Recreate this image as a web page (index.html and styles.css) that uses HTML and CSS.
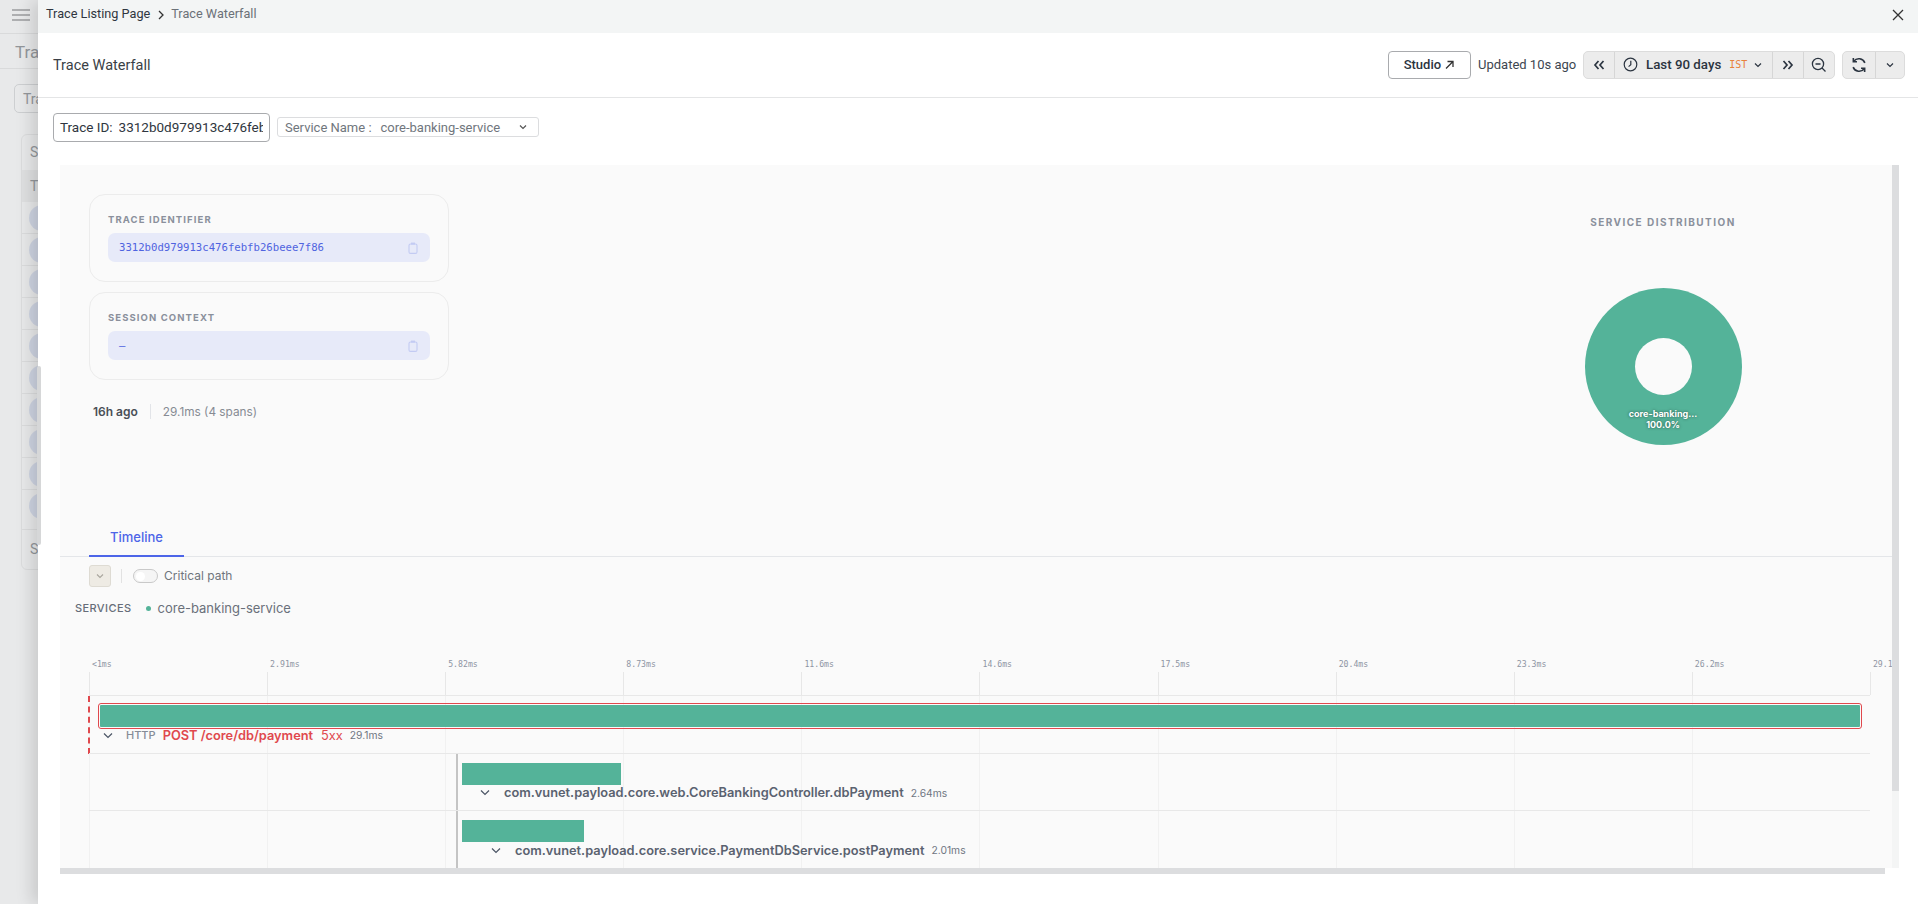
FILE: index.html
```html
<!DOCTYPE html>
<html lang="en">
<head>
    <meta charset="UTF-8">
    <title>Trace Waterfall</title>
    <link rel="stylesheet" href="styles.css">
</head>
<body>
    <!-- dimmed listing page behind the drawer -->
    <div class="page">
        <div class="page-top">
            <svg class="burger" width="18" height="12" viewBox="0 0 18 12"><path d="M0 1h18M0 6h18M0 11h18" stroke="#9a9c9e" stroke-width="1.6"/></svg>
        </div>
        <div class="page-head">Trace Listing</div>
        <div class="page-filter"><div class="page-input">Trace ID</div></div>
        <div class="page-card">
            <div class="page-card-title">Spans</div>
            <div class="page-card-th">Trace</div>
            <div class="page-row"><span class="page-avatar"></span></div>
            <div class="page-row"><span class="page-avatar"></span></div>
            <div class="page-row"><span class="page-avatar"></span></div>
            <div class="page-row"><span class="page-avatar"></span></div>
            <div class="page-row"><span class="page-avatar"></span></div>
            <div class="page-row"><span class="page-avatar"></span></div>
            <div class="page-row"><span class="page-avatar"></span></div>
            <div class="page-row"><span class="page-avatar"></span></div>
            <div class="page-row"><span class="page-avatar"></span></div>
            <div class="page-row page-row-last"><span class="page-avatar"></span></div>
            <div class="page-card-foot">Showing</div>
        </div>
    </div>

    <div class="page-thumb"></div>

    <div class="drawer">
        <div class="crumbs">
            <span class="crumb-link">Trace Listing Page</span>
            <svg class="crumb-sep" width="8" height="10" viewBox="0 0 8 10"><path d="M2 1l4 4-4 4" fill="none" stroke="#333" stroke-width="1.3"/></svg>
            <span class="crumb-now">Trace Waterfall</span>
            <svg class="close" width="12" height="12" viewBox="0 0 12 12"><path d="M1 1l10 10M11 1L1 11" stroke="#333" stroke-width="1.3"/></svg>
        </div>

        <div class="title-row">
            <div class="title">Trace Waterfall</div>
            <button class="studio">Studio
                <svg width="11" height="11" viewBox="0 0 11 11"><path d="M2 9.5L9 2.5M3.5 2.5H9V8" fill="none" stroke="#333" stroke-width="1.3"/></svg>
            </button>
            <span class="updated">Updated 10s ago</span>
            <div class="btn-group range">
                <div class="seg seg-prev">
                    <svg width="12" height="10" viewBox="0 0 12 10"><path d="M5.5 1L2 5l3.5 4M10.5 1L7 5l3.5 4" fill="none" stroke="#2b3440" stroke-width="1.7"/></svg>
                </div>
                <div class="seg seg-range">
                    <svg width="15" height="15" viewBox="0 0 15 15"><circle cx="7.5" cy="7.5" r="6.3" fill="none" stroke="#2b3440" stroke-width="1.2"/><path d="M7.8 3.8v4L5.6 9.6" fill="none" stroke="#2b3440" stroke-width="1.2"/></svg>
                    <span class="range-text">Last 90 days</span>
                    <span class="range-tz">IST</span>
                    <svg class="range-caret" width="8" height="6" viewBox="0 0 8 6"><path d="M1 1.5l3 3 3-3" fill="none" stroke="#2b3440" stroke-width="1.2"/></svg>
                </div>
                <div class="seg seg-next">
                    <svg width="12" height="10" viewBox="0 0 12 10"><path d="M1.5 1L5 5 1.5 9M6.5 1L10 5 6.5 9" fill="none" stroke="#2b3440" stroke-width="1.7"/></svg>
                </div>
                <div class="seg seg-zoom">
                    <svg width="16" height="16" viewBox="0 0 16 16"><circle cx="7" cy="7" r="5.6" fill="none" stroke="#2b3440" stroke-width="1.3"/><path d="M4.5 7h5M11 11l3.5 3.5" fill="none" stroke="#2b3440" stroke-width="1.3"/></svg>
                </div>
            </div>
            <div class="btn-group refresh">
                <div class="seg seg-refresh">
                    <svg width="16" height="16" viewBox="0 0 15 15"><path d="M13 5.5A6 6 0 0 0 2.6 4M2 9.5A6 6 0 0 0 12.4 11" fill="none" stroke="#2b3440" stroke-width="1.5"/><path d="M2.2 1v3.4h3.4M12.8 14v-3.4H9.4" fill="none" stroke="#2b3440" stroke-width="1.5"/></svg>
                </div>
                <div class="seg seg-more">
                    <svg width="8" height="6" viewBox="0 0 8 6"><path d="M1 1.5l3 3 3-3" fill="none" stroke="#2b3440" stroke-width="1.2"/></svg>
                </div>
            </div>
        </div>

        <div class="filter-row">
            <div class="trace-input">
                <span class="trace-key">Trace ID:</span>
                <span class="trace-val">3312b0d979913c476febfb26beee7f86</span>
            </div>
            <div class="service-select">
                <span class="service-label">Service Name :</span>
                <span class="service-value">core-banking-service</span>
                <svg width="8" height="6" viewBox="0 0 8 6"><path d="M1 1.5l3 3 3-3" fill="none" stroke="#555" stroke-width="1.2"/></svg>
            </div>
        </div>

        <div class="panel">
            <div class="summary">
                <div class="summary-left">
                    <div class="id-card">
                        <div class="id-label">TRACE IDENTIFIER</div>
                        <div class="id-field">
                            <span class="id-value">3312b0d979913c476febfb26beee7f86</span>
                            <svg width="10" height="12" viewBox="0 0 10 12"><rect x="1" y="2" width="8" height="9.4" rx="1.5" fill="none" stroke="#c3cbf3" stroke-width="1.1"/><rect x="3" y="0.6" width="4" height="2" fill="#c3cbf3"/></svg>
                        </div>
                    </div>
                    <div class="id-card">
                        <div class="id-label">SESSION CONTEXT</div>
                        <div class="id-field">
                            <span class="id-value">–</span>
                            <svg width="10" height="12" viewBox="0 0 10 12"><rect x="1" y="2" width="8" height="9.4" rx="1.5" fill="none" stroke="#c3cbf3" stroke-width="1.1"/><rect x="3" y="0.6" width="4" height="2" fill="#c3cbf3"/></svg>
                        </div>
                    </div>
                    <div class="meta">
                        <span class="meta-ago">16h ago</span>
                        <span class="meta-dur">29.1ms (4 spans)</span>
                    </div>
                </div>
                <div class="summary-right">
                    <div class="dist-title">SERVICE DISTRIBUTION</div>
                    <div class="donut">
                        <div class="donut-text">core-banking...<br>100.0%</div>
                    </div>
                </div>
            </div>

            <div class="tabs"><div class="tab">Timeline</div></div>

            <div class="toolbar">
                <div class="collapse-btn">
                    <svg width="8" height="6" viewBox="0 0 8 6"><path d="M1 1.5l3 3 3-3" fill="none" stroke="#a9a69e" stroke-width="1.1"/></svg>
                </div>
                <div class="toolbar-sep"></div>
                <div class="toggle"><span class="toggle-knob"></span></div>
                <span class="toggle-label">Critical path</span>
            </div>

            <div class="services">
                <span class="services-label">SERVICES</span>
                <span class="services-dot"></span>
                <span class="services-name">core-banking-service</span>
            </div>

            <div class="timeline">
                <div class="ruler">
                    <span>&lt;1ms</span><span>2.91ms</span><span>5.82ms</span><span>8.73ms</span><span>11.6ms</span>
                    <span>14.6ms</span><span>17.5ms</span><span>20.4ms</span><span>23.3ms</span><span>26.2ms</span><span>29.1ms</span>
                </div>
                <div class="ticks">
                    <i></i><i></i><i></i><i></i><i></i><i></i><i></i><i></i><i></i><i></i>
                </div>
                <div class="rows">
                    <div class="grid">
                        <i></i><i></i><i></i><i></i><i></i><i></i><i></i><i></i><i></i><i></i>
                    </div>
                    <div class="row row-error">
                        <div class="bar bar-error" style="margin-left: 11px; width: 1760px"></div>
                        <div class="span-line" style="margin-left: 14px">
                            <svg width="10" height="7" viewBox="0 0 10 7"><path d="M1 1.5l4 4 4-4" fill="none" stroke="#4b5565" stroke-width="1.2"/></svg>
                            <span class="span-kind">HTTP</span>
                            <span class="span-name-err">POST /core/db/payment</span>
                            <span class="span-code">5xx</span>
                            <span class="span-dur">29.1ms</span>
                        </div>
                    </div>
                    <div class="row row-child">
                        <div class="bar" style="margin-left: 373px; width: 159px"></div>
                        <div class="span-line" style="margin-left: 391px">
                            <svg width="10" height="7" viewBox="0 0 10 7"><path d="M1 1.5l4 4 4-4" fill="none" stroke="#4b5565" stroke-width="1.2"/></svg>
                            <span class="span-name">com.vunet.payload.core.web.CoreBankingController.dbPayment</span>
                            <span class="span-dur">2.64ms</span>
                        </div>
                    </div>
                    <div class="row row-child">
                        <div class="bar" style="margin-left: 373px; width: 122px"></div>
                        <div class="span-line" style="margin-left: 402px">
                            <svg width="10" height="7" viewBox="0 0 10 7"><path d="M1 1.5l4 4 4-4" fill="none" stroke="#4b5565" stroke-width="1.2"/></svg>
                            <span class="span-name">com.vunet.payload.core.service.PaymentDbService.postPayment</span>
                            <span class="span-dur">2.01ms</span>
                        </div>
                    </div>
                </div>
            </div>
        </div>
        <div class="scroll-v"><div class="scroll-v-thumb"></div></div>
        <div class="scroll-h"></div>
    </div>
</body>
</html>
```

FILE: styles.css
```css
* {
    box-sizing: border-box;
}
body {
    margin: 0;
    height: 904px;
    overflow: hidden;
    position: relative;
    font-family: "Roboto", "Liberation Sans", sans-serif;
    background-color: #e8e9ea;
    color: #2f3640;
}

/* listing page behind the drawer */
.page {
    width: 100%;
    height: 100%;
}
.page-top {
    height: 34px;
    border-bottom: 1px solid #d9dadb;
    padding: 9px 0 0 12px;
}
.burger {
    display: block;
}
.page-head {
    height: 35px;
    padding: 8px 0 0 15px;
    font-size: 17px;
    color: #93979b;
    border-bottom: 1px solid #d9dadb;
}
.page-filter {
    padding: 15px 0 0 14px;
}
.page-input {
    width: 200px;
    height: 29px;
    padding: 6px 8px;
    border: 1px solid #cdcfd1;
    border-radius: 5px;
    font-size: 14px;
    color: #93979b;
}
.page-card {
    width: 300px;
    height: 436px;
    margin: 21px 0 0 21px;
    border: 1px solid #dbdcdd;
    border-radius: 6px;
    font-size: 14px;
    color: #93979b;
}
.page-card-title {
    height: 35px;
    padding: 9px 8px;
}
.page-card-th {
    height: 32px;
    padding: 8px;
    background-color: #dfe0e1;
}
.page-row {
    height: 32px;
    padding: 3px 7px;
    border-bottom: 1px solid #dbdcdd;
}
.page-row-last {
    height: 40px;
}
.page-avatar {
    display: block;
    width: 26px;
    height: 26px;
    border-radius: 50%;
    background-color: #ced4e2;
}
.page-card-foot {
    padding: 11px 8px;
}
.page-thumb {
    position: absolute;
    left: 37px;
    top: 366px;
    width: 4px;
    height: 179px;
    background-color: #d6d7d8;
    border-radius: 2px;
    z-index: 3;
}

/* drawer */
.drawer {
    position: absolute;
    left: 38px;
    top: 0;
    right: 0;
    bottom: 0;
    background-color: #fff;
    box-shadow: -6px 0 16px rgba(0, 0, 0, 0.14);
}
.crumbs {
    height: 33px;
    display: flex;
    align-items: center;
    padding: 0 14px 0 8px;
    background-color: #f3f5f5;
    font-size: 12.7px;
}
.crumb-link {
    color: #2f3640;
    margin-bottom: 6px;
}
.crumb-sep {
    margin: 0 6px 4px 7px;
}
.crumb-now {
    color: #6b7178;
    margin-bottom: 6px;
}
.close {
    margin-left: auto;
    margin-bottom: 3px;
}
.title-row {
    height: 65px;
    display: flex;
    align-items: center;
    padding: 0 13px 1px 15px;
    border-bottom: 1px solid #e4e5e6;
}
.title {
    font-size: 14.5px;
    color: #3a3f46;
    margin-right: auto;
    margin-top: 2px;
}
.studio {
    width: 83px;
    height: 28px;
    padding: 0;
    border: 1px solid #a9abae;
    border-radius: 4px;
    background-color: #fff;
    font-family: inherit;
    font-size: 13px;
    font-weight: 500;
    color: #2b3440;
}
.studio svg {
    vertical-align: -1px;
}
.updated {
    margin: 0 7px;
    font-size: 13px;
    color: #3d4650;
    width: 98px;
    white-space: nowrap;
}
.btn-group {
    display: flex;
    height: 28px;
    background-color: #ececec;
    border: 1px solid #dcdcdc;
    border-radius: 5px;
}
.range {
    width: 252px;
}
.refresh {
    width: 63px;
    margin-left: 7px;
}
.seg {
    display: flex;
    align-items: center;
    justify-content: center;
    border-right: 1px solid #d6d6d6;
}
.seg:last-child {
    border-right: 0;
}
.seg-prev {
    width: 31px;
}
.seg-range {
    width: 158px;
    justify-content: flex-start;
    padding-left: 8px;
    gap: 8px;
    font-size: 13.3px;
    font-weight: 500;
    color: #2b3440;
}
.range-tz {
    font-family: "DejaVu Sans Mono", monospace;
    font-size: 10px;
    color: #e8813a;
}
.range-caret {
    margin-left: -1px;
}
.seg-next {
    width: 31px;
}
.seg-zoom {
    flex: 1;
}
.seg-refresh {
    width: 33px;
}
.seg-more {
    flex: 1;
}
.filter-row {
    height: 67px;
    display: flex;
    align-items: flex-start;
    gap: 7px;
    padding: 15px 0 0 15px;
}
.trace-input {
    width: 217px;
    height: 29px;
    padding: 0 6px;
    display: flex;
    gap: 6px;
    line-height: 27px;
    border: 1px solid #a9abae;
    border-radius: 4px;
    font-size: 13.5px;
    color: #2f3640;
    white-space: nowrap;
}
.trace-key {
    flex: none;
}
.trace-val {
    flex: 1;
    overflow: hidden;
}
.service-select {
    width: 262px;
    height: 20px;
    margin-top: 4px;
    display: flex;
    align-items: center;
    padding: 0 11px 0 7px;
    border: 1px solid #dcdddf;
    border-radius: 3px;
    font-size: 13px;
    color: #70767d;
}
.service-value {
    margin-left: 9px;
    margin-right: auto;
}

/* panel */
.panel {
    position: absolute;
    left: 22px;
    top: 165px;
    width: 1832px;
    height: 703px;
    overflow: hidden;
    background-color: #fafafa;
    font-family: "Inter", "Liberation Sans", sans-serif;
}
.summary {
    height: 355px;
    display: flex;
    justify-content: space-between;
}
.summary-left {
    padding: 29px 0 0 29px;
}
.id-card {
    width: 360px;
    height: 88px;
    margin-bottom: 10px;
    padding: 18px 18px 0;
    border: 1px solid #ececec;
    border-radius: 16px;
}
.id-label {
    font-size: 9.5px;
    font-weight: 700;
    letter-spacing: 1.1px;
    line-height: 13px;
    color: #8a909c;
}
.id-field {
    width: 322px;
    height: 29px;
    margin-top: 7px;
    padding: 0 12px 0 11px;
    display: flex;
    align-items: center;
    justify-content: space-between;
    background-color: #e7eaf9;
    border-radius: 7px;
}
.id-value {
    font-family: "DejaVu Sans Mono", monospace;
    font-size: 10.65px;
    color: #4f63e0;
}
.meta {
    display: flex;
    align-items: center;
    margin: 24px 0 0 4px;
    font-size: 12px;
}
.meta-ago {
    font-weight: 600;
    color: #4a4f57;
    padding-right: 12px;
    border-right: 1px solid #e2e4e8;
}
.meta-dur {
    padding-left: 12px;
    font-size: 11.8px;
    color: #868b93;
}
.summary-right {
    width: 458px;
    padding-top: 50px;
    display: flex;
    flex-direction: column;
    align-items: center;
}
.dist-title {
    font-size: 10px;
    font-weight: 700;
    letter-spacing: 1.45px;
    line-height: 14px;
    color: #8a909c;
}
.donut {
    position: relative;
    width: 157px;
    height: 157px;
    margin-top: 59px;
    border-radius: 50%;
    background-color: #54b399;
}
.donut::after {
    content: "";
    position: absolute;
    left: 50px;
    top: 50px;
    width: 57px;
    height: 57px;
    border-radius: 50%;
    background-color: #fafafa;
}
.donut-text {
    position: absolute;
    left: 0;
    right: 0;
    top: 120px;
    text-align: center;
    font-size: 9px;
    font-weight: 700;
    line-height: 11px;
    color: #fff;
    text-shadow: 0 0 3px rgba(0, 0, 0, 0.55);
}
.tabs {
    height: 37px;
    padding-left: 29px;
    border-bottom: 1px solid #e4e6e9;
}
.tab {
    width: 95px;
    height: 37px;
    padding-top: 9px;
    text-align: center;
    font-size: 13px;
    font-weight: 500;
    color: #4d65e8;
    border-bottom: 2px solid #4d65e8;
}
.toolbar {
    height: 22px;
    margin-top: 8px;
    padding-left: 29px;
    display: flex;
    align-items: center;
}
.collapse-btn {
    width: 22px;
    height: 22px;
    display: flex;
    align-items: center;
    justify-content: center;
    background-color: #eeebe4;
    border: 1px solid #dedbd3;
    border-radius: 3px;
}
.toolbar-sep {
    width: 1px;
    height: 14px;
    margin: 0 11px 0 10px;
    background-color: #e2e2e2;
}
.toggle {
    width: 25px;
    height: 14px;
    margin-right: 6px;
    padding: 1.5px 2px;
    background-color: #f5f5f5;
    border: 1px solid #c9c9c9;
    border-radius: 7px;
}
.toggle-knob {
    display: block;
    width: 9px;
    height: 9px;
    border-radius: 50%;
    background-color: #fff;
}
.toggle-label {
    margin-bottom: 2px;
    font-size: 12px;
    color: #6f757d;
}
.services {
    height: 20px;
    margin-top: 11px;
    padding-left: 15px;
    display: flex;
    align-items: center;
}
.services-label {
    font-size: 11px;
    font-weight: 500;
    letter-spacing: 0.4px;
    color: #666d79;
}
.services-dot {
    width: 5px;
    height: 5px;
    margin: 0 6px 0 15px;
    border-radius: 50%;
    background-color: #54b399;
}
.services-name {
    font-size: 13px;
    color: #6a707a;
}

/* waterfall */
.timeline {
    margin: 39px 0 0 29px;
}
.ruler {
    height: 15px;
    display: flex;
    white-space: nowrap;
    font-family: "DejaVu Sans Mono", monospace;
    font-size: 8.2px;
    line-height: 15px;
    color: #8e95a3;
}
.ruler span {
    flex: 0 0 178.1px;
    padding-left: 3px;
}
.ticks {
    height: 23px;
    width: 1782px;
    display: flex;
    border-right: 1px solid #e7e7e7;
}
.ticks i {
    flex: 1;
    border-left: 1px solid #e7e7e7;
}
.rows {
    position: relative;
    width: 1781px;
}
.grid {
    position: absolute;
    left: 0;
    top: 0;
    width: 100%;
    height: 173px;
    display: flex;
}
.grid i {
    flex: 1;
    border-left: 1px solid #f1f1f1;
}
.row {
    position: relative;
    height: 57.5px;
    padding-top: 9px;
    border-top: 1px solid #e8e8e8;
}
.row-error::before {
    content: "";
    position: absolute;
    left: -1px;
    top: 0;
    height: 58px;
    border-left: 2px dashed #e0484d;
}
.row-child::before {
    content: "";
    position: absolute;
    left: 367px;
    top: 0;
    height: 58px;
    border-left: 2px solid #c4c4c4;
}
.bar {
    position: relative;
    height: 22px;
    background-color: #54b399;
}
.bar-error {
    outline: 1px solid #e0484d;
    outline-offset: 1px;
    border-radius: 1px;
}
.span-line {
    position: relative;
    display: flex;
    align-items: center;
    height: 16px;
    font-size: 12.8px;
    white-space: nowrap;
}
.span-kind {
    margin-left: 13px;
    font-size: 11px;
    font-weight: 500;
    color: #858c98;
}
.span-name-err {
    margin-left: 7px;
    font-weight: 600;
    color: #e0484d;
}
.span-code {
    margin-left: 8px;
    color: #e0484d;
}
.span-dur {
    margin-left: 7px;
    font-size: 10.3px;
    color: #6f7682;
}
.span-name {
    margin-left: 14px;
    font-weight: 600;
    color: #5a6270;
}
.scroll-v {
    position: absolute;
    left: 1854px;
    top: 165px;
    width: 7px;
    height: 703px;
    background-color: #f4f5f5;
}
.scroll-v-thumb {
    height: 626px;
    background-color: #dcdddf;
}
.scroll-h {
    position: absolute;
    left: 22px;
    top: 868px;
    width: 1825px;
    height: 6px;
    background-color: #dcdddf;
}
```
